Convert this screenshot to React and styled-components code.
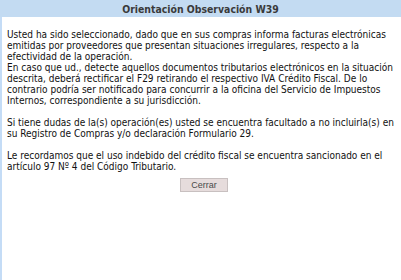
import styled, { createGlobalStyle } from "styled-components";

const GlobalStyle = createGlobalStyle`
  html, body {
    margin: 0;
    padding: 0;
    background: #ffffff;
  }
`;

const Page = styled.div`
  width: 401px;
  height: 280px;
  display: flex;
  flex-direction: column;
  font-family: "DejaVu Sans Condensed", "DejaVu Sans", sans-serif;
`;

const Header = styled.div`
  height: 17px;
  flex-shrink: 0;
  display: flex;
  align-items: center;
  justify-content: center;
  background: #c3dbf2;
  color: #3a3a3a;
  font-weight: bold;
  font-size: 10.4px;
`;

const Body = styled.div`
  flex: 1;
  border-left: 2px solid #c4dcf6;
  padding: 12px 0 0 5px;
  color: #111111;
  font-size: 10px;
  line-height: 11px;
`;

const Paragraph = styled.p`
  margin: 0 0 11px;
  white-space: nowrap;

  &:last-of-type {
    margin-bottom: 0;
  }
`;

const Actions = styled.div`
  display: flex;
  justify-content: center;
  padding-top: 6px;
`;

const Button = styled.button`
  width: 48px;
  height: 14px;
  padding: 0;
  border: 1px solid #c8c0c0;
  background: #e6dcdc;
  color: #4a4a4a;
  font-family: "Liberation Sans", Arial, sans-serif;
  font-size: 9px;
`;

export default function App() {
  return (
    <Page>
      <GlobalStyle />
      <Header>Orientación Observación W39</Header>
      <Body>
        <Paragraph>
          Usted ha sido seleccionado, dado que en sus compras informa facturas electrónicas
          <br />
          emitidas por proveedores que presentan situaciones irregulares, respecto a la
          <br />
          efectividad de la operación.
          <br />
          En caso que ud., detecte aquellos documentos tributarios electrónicos en la situación
          <br />
          descrita, deberá rectificar el F29 retirando el respectivo IVA Crédito Fiscal. De lo
          <br />
          contrario podría ser notificado para concurrir a la oficina del Servicio de Impuestos
          <br />
          Internos, correspondiente a su jurisdicción.
        </Paragraph>
        <Paragraph>
          Si tiene dudas de la(s) operación(es) usted se encuentra facultado a no incluirla(s) en
          <br />
          su Registro de Compras y/o declaración Formulario 29.
        </Paragraph>
        <Paragraph>
          Le recordamos que el uso indebido del crédito fiscal se encuentra sancionado en el
          <br />
          artículo 97 Nº 4 del Código Tributario.
        </Paragraph>
        <Actions>
          <Button>Cerrar</Button>
        </Actions>
      </Body>
    </Page>
  );
}
